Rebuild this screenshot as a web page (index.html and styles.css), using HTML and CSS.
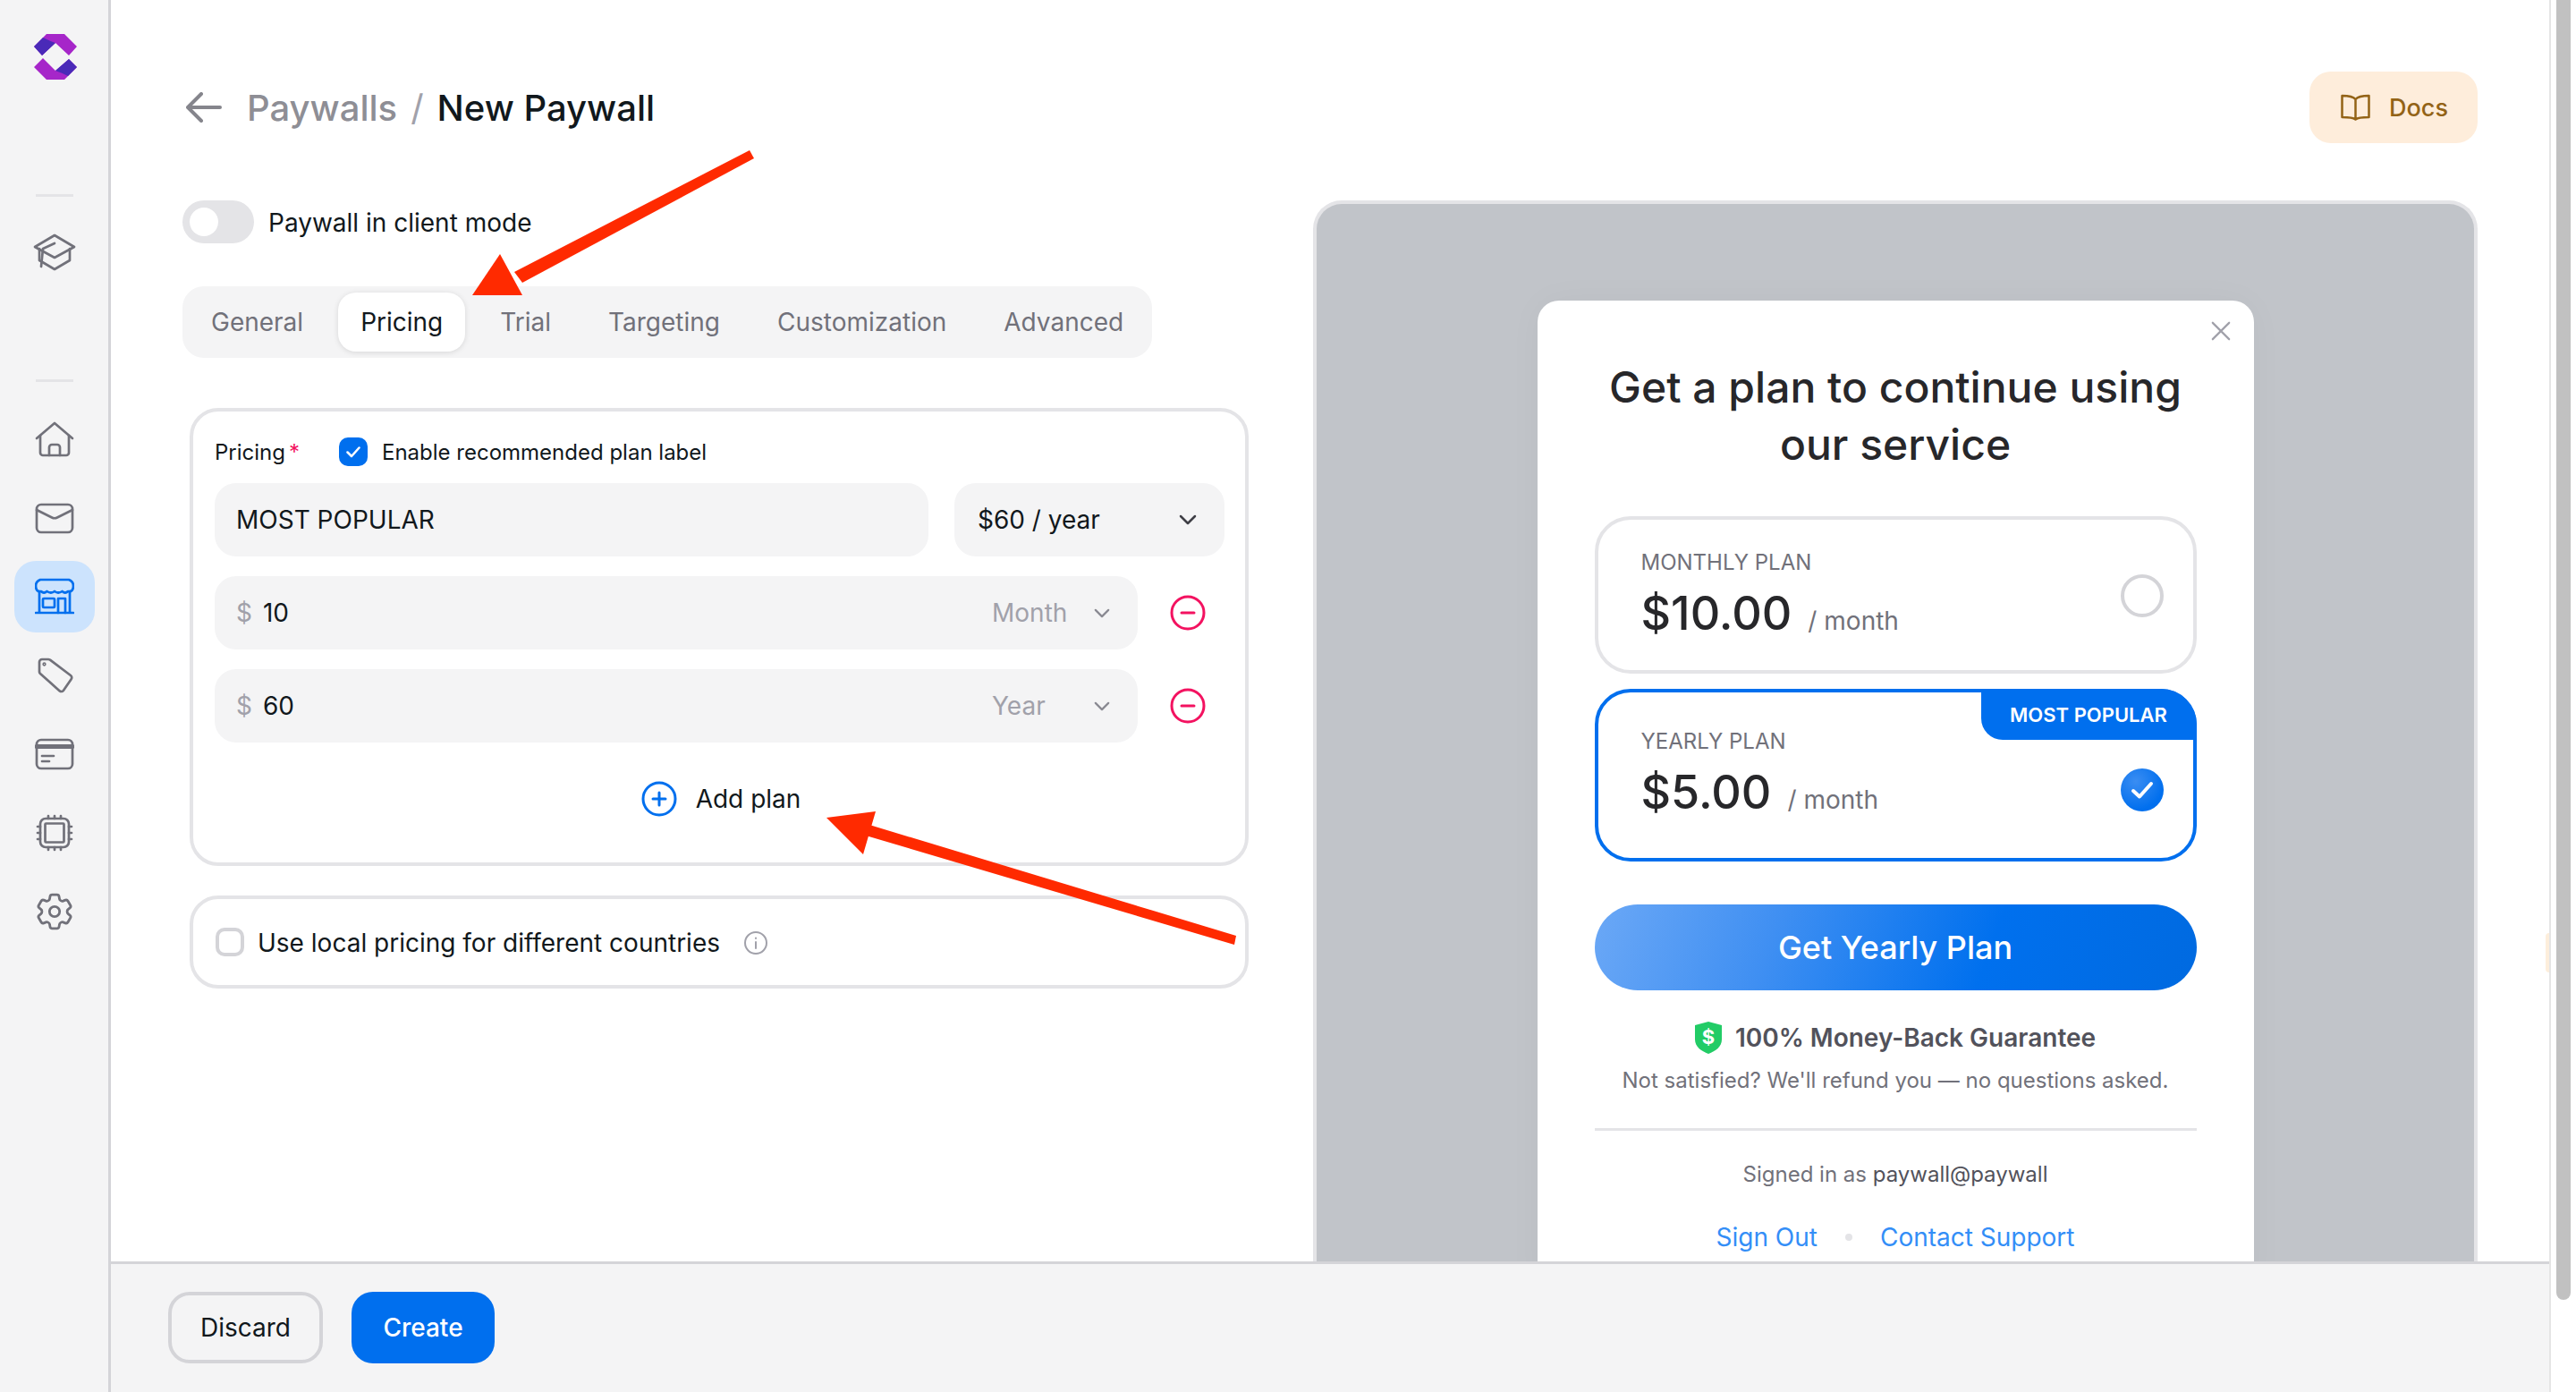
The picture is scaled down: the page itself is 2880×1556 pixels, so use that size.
FILE: index.html
```html
<!DOCTYPE html>
<html lang="en">
<head>
<meta charset="UTF-8">
<meta name="viewport" content="width=device-width, initial-scale=1.0">
<title>New Paywall</title>
<link rel="stylesheet" href="styles.css">
</head>
<body>
  <aside class="sidebar">
    <svg class="logo" viewBox="0 0 50 52">
      <path d="M15 0H35L49 14 40 24 25 10 10 24 1 14Z" fill="#a626c9"/>
      <path d="M1 14 11 4Q19 8 25 10L10 24Z" fill="#4a2ab8"/>
      <path d="M1 37 11 27 25 41 40 28 49 37 35 51H15Z" fill="#a626c9"/>
      <path d="M40 28 49 37 39 47Q31 43 25 41Z" fill="#4a2ab8"/>
    </svg>
    <div class="side-rule first"></div>
    <div class="side-item">
      <svg class="side-icon cap" viewBox="36 258 48 48">
        <path d="M60 263 82 276 60 288 38 276Z"/>
        <path d="M43 278V291L60 301 77 291V278"/>
        <path d="M60 272 47 278 45 298"/>
      </svg>
    </div>
    <div class="side-rule"></div>
    <nav class="side-nav">
      <div class="side-item">
        <svg class="side-icon" viewBox="0 0 44 44">
          <path d="M2 21 22 4 42 21"/>
          <path d="M6 18V37a3 3 0 0 0 3 3H35a3 3 0 0 0 3-3V18"/>
          <path d="M16 40V31a3 3 0 0 1 3-3h6a3 3 0 0 1 3 3V40"/>
        </svg>
      </div>
      <div class="side-item">
        <svg class="side-icon" viewBox="0 0 44 44">
          <rect x="2" y="7" width="40" height="31" rx="5"/>
          <path d="M2 13 19 21.5q3 1.500 6 0L42 13"/>
        </svg>
      </div>
      <div class="side-item active">
        <svg class="side-icon" viewBox="0 0 44 44">
          <path d="M6 3H38Q43 5 43 10 43 17 37 16 34 19 30.500 16 26 19 22 16 18 19 13.500 16 10 19 7 16 1 17 1 10 1 5 6 3Z"/>
          <path d="M5 17V40M39 17V40M1 40H43"/>
          <rect x="9" y="24" width="13" height="10" rx="1"/>
          <path d="M26 40V24H34V40"/>
        </svg>
      </div>
      <div class="side-item">
        <svg class="side-icon" viewBox="0 0 44 44">
          <path d="M5 7a3 3 0 0 1 3-3h7q1 0 2 .6L40 22a3 3 0 0 1 .6 4.200L32 38.800a3 3 0 0 1-4.200.6L6 20q-1-1-1-2Z"/>
          <circle cx="10.500" cy="9.500" r=".8"/>
        </svg>
      </div>
      <div class="side-item">
        <svg class="side-icon" viewBox="0 0 44 44">
          <rect x="2" y="6" width="40" height="32" rx="5"/>
          <path d="M2 13.500H42" class="thick"/>
          <path d="M8 24H21M8 30H16"/>
        </svg>
      </div>
      <div class="side-item">
        <svg class="side-icon" viewBox="0 0 44 44">
          <rect x="6" y="6" width="32" height="32" rx="6"/>
          <rect x="11.500" y="11.500" width="21" height="21" rx="1"/>
          <path d="M15 3V6M22 3V6M29 3V6M15 38V41M22 38V41M29 38V41M3 15H6M3 22H6M3 29H6M38 15H41M38 22H41M38 29H41"/>
        </svg>
      </div>
      <div class="side-item">
        <svg class="side-icon" viewBox="1.500 1.500 21 21">
          <path class="thin" d="M9.594 3.940c.09-.542.56-.94 1.110-.94h2.593c.55 0 1.020.398 1.110.94l.213 1.281c.063.374.313.686.645.870.074.04.147.083.22.127.325.196.72.257 1.075.124l1.217-.456a1.125 1.125 0 0 1 1.370.49l1.296 2.247a1.125 1.125 0 0 1-.26 1.431l-1.003.827c-.293.241-.438.613-.43.992a7.723 7.723 0 0 1 0 .255c-.008.378.137.75.43.991l1.004.827c.424.35.534.955.26 1.430l-1.298 2.247a1.125 1.125 0 0 1-1.369.491l-1.217-.456c-.355-.133-.75-.072-1.076.124a6.470 6.470 0 0 1-.22.128c-.331.183-.581.495-.644.869l-.213 1.281c-.09.543-.56.94-1.110.94h-2.594c-.55 0-1.019-.398-1.110-.94l-.213-1.281c-.062-.374-.312-.686-.644-.87a6.520 6.520 0 0 1-.22-.127c-.325-.196-.72-.257-1.076-.124l-1.217.456a1.125 1.125 0 0 1-1.369-.49l-1.297-2.247a1.125 1.125 0 0 1 .26-1.431l1.004-.827c.292-.24.437-.613.43-.991a6.932 6.932 0 0 1 0-.255c.007-.38-.138-.751-.43-.992l-1.004-.827a1.125 1.125 0 0 1-.26-1.430l1.297-2.247a1.125 1.125 0 0 1 1.370-.491l1.216.456c.356.133.751.072 1.076-.124.072-.044.146-.086.22-.128.332-.183.582-.495.644-.869l.214-1.280Z"/>
          <circle class="thin" cx="12" cy="12" r="2.700"/>
        </svg>
      </div>
    </nav>
  </aside>

  <div class="main">
    <div class="content">
      <header class="page-head">
        <div class="crumbs">
          <svg class="back" viewBox="0 0 40 34">
            <path d="M38 17H3M17 2 2 17 17 32"/>
          </svg>
          <span class="crumb-link">Paywalls</span>
          <span class="crumb-sep">/</span>
          <span class="crumb-now">New Paywall</span>
        </div>
        <button class="docs-btn">
          <svg class="book" viewBox="0 0 33 30">
            <path d="M16.500 6C14 3 9 2 1.500 2v24c7 0 12 0 15 2.500 3-2.500 8-2.500 15-2.500V2C24 2 19 3 16.500 6ZM16.500 6v22"/>
          </svg>
          Docs
        </button>
      </header>

      <div class="columns">
        <section class="left">
          <div class="client-mode">
            <span class="toggle"><span class="knob"></span></span>
            <span class="client-text">Paywall in client mode</span>
          </div>

          <div class="tabs">
            <span class="tab">General</span>
            <span class="tab selected">Pricing</span>
            <span class="tab">Trial</span>
            <span class="tab">Targeting</span>
            <span class="tab">Customization</span>
            <span class="tab">Advanced</span>
          </div>

          <div class="panel pricing">
            <div class="pricing-head">
              <span class="field-label">Pricing<span class="req">*</span></span>
              <span class="check on">
                <svg viewBox="0 0 32 32"><path d="M9.500 16.500 14 21 22.500 11.500"/></svg>
              </span>
              <span class="check-label">Enable recommended plan label</span>
            </div>

            <div class="row">
              <div class="input grow">MOST POPULAR</div>
              <div class="input plan-select">
                $60 / year
                <svg class="chev" viewBox="0 0 20 12"><path d="M2 2 10 10 18 2"/></svg>
              </div>
            </div>

            <div class="row">
              <div class="input price-input">
                <span class="dollar">$</span>
                <span class="amount">10</span>
                <span class="period">Month</span>
                <svg class="chev small" viewBox="0 0 20 12"><path d="M2 2 10 10 18 2"/></svg>
              </div>
              <svg class="remove" viewBox="0 0 40 40">
                <circle cx="20" cy="20" r="18"/>
                <path d="M13 20H27"/>
              </svg>
            </div>

            <div class="row">
              <div class="input price-input">
                <span class="dollar">$</span>
                <span class="amount">60</span>
                <span class="period">Year</span>
                <svg class="chev small" viewBox="0 0 20 12"><path d="M2 2 10 10 18 2"/></svg>
              </div>
              <svg class="remove" viewBox="0 0 40 40">
                <circle cx="20" cy="20" r="18"/>
                <path d="M13 20H27"/>
              </svg>
            </div>

            <div class="add-plan">
              <svg class="add-icon" viewBox="0 0 40 40">
                <circle cx="20" cy="20" r="18"/>
                <path d="M13 20H27M20 13V27"/>
              </svg>
              Add plan
            </div>
          </div>

          <div class="panel local">
            <span class="check"></span>
            <span class="local-text">Use local pricing for different countries</span>
            <svg class="info" viewBox="0 0 28 28">
              <circle cx="14" cy="14" r="12"/>
              <path d="M14 13V20M14 8.500V9"/>
            </svg>
          </div>
        </section>

        <section class="preview">
          <div class="modal">
            <svg class="close" viewBox="0 0 24 24"><path d="M2 2 22 22M22 2 2 22"/></svg>
            <h2 class="modal-title">Get a plan to continue using our service</h2>

            <div class="plan">
              <div>
                <div class="plan-name">MONTHLY PLAN</div>
                <div class="plan-price"><span class="big">$10.00</span><span class="per">/ month</span></div>
              </div>
              <span class="radio"></span>
            </div>

            <div class="plan best">
              <span class="badge">MOST POPULAR</span>
              <div>
                <div class="plan-name">YEARLY PLAN</div>
                <div class="plan-price"><span class="big">$5.00</span><span class="per">/ month</span></div>
              </div>
              <span class="radio checked">
                <svg viewBox="0 0 48 48"><path d="M14 25 21 31.500 34 17"/></svg>
              </span>
            </div>

            <button class="cta">Get Yearly Plan</button>

            <div class="guarantee">
              <svg class="shield" viewBox="0 0 30 36">
                <path d="M15 0 30 4V20C30 28 23 33 15 36 7 33 0 28 0 20V4Z"/>
                <text x="15" y="25" text-anchor="middle">$</text>
              </svg>
              100% Money-Back Guarantee
            </div>
            <p class="refund">Not satisfied? We'll refund you — no questions asked.</p>
            <div class="modal-rule"></div>
            <p class="signed">Signed in as <span class="who">paywall@paywall</span></p>
            <div class="links">
              <span>Sign Out</span>
              <span class="dot"></span>
              <span>Contact Support</span>
            </div>
          </div>
        </section>
      </div>
    </div>

    <footer class="footer">
      <button class="btn-outline">Discard</button>
      <button class="btn-primary">Create</button>
    </footer>
  </div>

  <div class="scrollbar"><div class="thumb"></div></div>
  <div class="edge-tab"></div>

  <!-- red annotation arrows drawn over the screenshot -->
  <svg class="arrows" viewBox="0 0 2880 1556">
    <path d="M838 168 843 177 584 316 575 304Z"/>
    <path d="M528 330 559 284 584 330Z"/>
    <path d="M1382 1046 1380 1056 968 934 972 922Z"/>
    <path d="M924 914 979 907 965 955Z"/>
  </svg>
</body>
</html>
```

FILE: styles.css
```css
* {
  box-sizing: border-box;
}

html, body {
  margin: 0;
  height: 100%;
}

body {
  display: flex;
  overflow: hidden;
  position: relative;
  background: #fff;
  color: #11181c;
  font-family: Inter, "Liberation Sans", sans-serif;
  font-size: 30px;
}

button {
  font-family: inherit;
  cursor: pointer;
}

p, h2 {
  margin: 0;
}

/* sidebar */
.sidebar {
  width: 124px;
  flex: none;
  display: flex;
  flex-direction: column;
  align-items: flex-start;
  padding: 38px 0 0 16px;
  background: #f4f4f5;
  border-right: 3px solid #d4d4d8;
}

.logo {
  width: 50px;
  height: 52px;
  margin-left: 21px;
}

.side-rule {
  width: 42px;
  height: 3px;
  margin: 0 0 0 24px;
  background: #e4e4e7;
}

.side-rule.first {
  margin-top: 127px;
  margin-bottom: 22px;
}

.side-nav {
  display: flex;
  flex-direction: column;
  gap: 8px;
  margin-top: 24px;
}

.side-item {
  width: 90px;
  height: 80px;
  display: flex;
  align-items: center;
  justify-content: center;
  border-radius: 24px;
}

.side-rule:not(.first) {
  margin-top: 102px;
}

.side-item.active {
  background: #cce3fd;
}

.side-icon {
  width: 44px;
  height: 44px;
  fill: none;
  stroke: #71717a;
  stroke-width: 2.700;
  stroke-linecap: round;
  stroke-linejoin: round;
}

.side-icon.cap {
  width: 48px;
  height: 48px;
}

.side-item.active .side-icon {
  stroke: #006fee;
}

.side-icon .thick {
  stroke-width: 5;
}

.side-icon .thin {
  stroke-width: 1.350;
}

/* main area */
.main {
  flex: 1;
  min-width: 0;
  display: flex;
  flex-direction: column;
}

.content {
  flex: 1;
  min-height: 0;
  overflow: hidden;
  padding: 80px 80px 0 80px;
}

.page-head {
  height: 80px;
  display: flex;
  align-items: center;
  justify-content: space-between;
  margin-bottom: 64px;
}

.crumbs {
  display: flex;
  align-items: center;
  font-size: 40px;
  margin-left: 4px;
}

.back {
  width: 40px;
  height: 34px;
  margin-right: 28px;
  fill: none;
  stroke: #85858c;
  stroke-width: 4;
  stroke-linecap: round;
  stroke-linejoin: round;
}

.crumb-link {
  color: #8e8e95;
  font-weight: 500;
}

.crumb-sep {
  color: #a1a1aa;
  margin: 0 15px;
}

.crumb-now {
  font-weight: 500;
}

.docs-btn {
  height: 80px;
  width: 188px;
  display: flex;
  align-items: center;
  gap: 21px;
  padding: 0 0 0 35px;
  border: none;
  border-radius: 24px;
  background: #feeddb;
  color: #936316;
  font-size: 27px;
  font-weight: 500;
}

.book {
  width: 33px;
  height: 30px;
  fill: none;
  stroke: #936316;
  stroke-width: 2.500;
  stroke-linejoin: round;
}

.columns {
  display: flex;
  gap: 72px;
  height: 1300px;
}

.left {
  width: 1192px;
  flex: none;
}

.client-mode {
  display: flex;
  align-items: center;
  gap: 16px;
  height: 48px;
  font-size: 28px;
}

.client-text {
  padding-top: 2px;
}

.toggle {
  width: 80px;
  height: 48px;
  padding: 8px;
  border-radius: 24px;
  background: #e4e4e7;
}

.knob {
  display: block;
  width: 32px;
  height: 32px;
  border-radius: 50%;
  background: #fff;
}

.tabs {
  display: inline-flex;
  gap: 14px;
  height: 80px;
  margin-top: 48px;
  padding: 7px;
  border-radius: 24px;
  background: #f4f4f5;
  color: #71717a;
  font-size: 28px;
}

.tab {
  display: flex;
  align-items: center;
  padding: 0 25px;
  border-radius: 20px;
}

.tab.selected {
  background: #fff;
  color: #11181c;
  box-shadow: 0 1px 6px rgba(0, 0, 0, 0.12);
}

.panel {
  margin-left: 8px;
  border: 4px solid #e4e4e7;
  border-radius: 32px;
}

.pricing {
  height: 512px;
  margin-top: 56px;
  padding: 20px 23px 0 24px;
}

.pricing-head {
  display: flex;
  align-items: center;
  height: 50px;
  margin-bottom: 10px;
  font-size: 24px;
}

.field-label {
  width: 139px;
}

.req {
  color: #f31260;
  margin-left: 4px;
}

.check {
  width: 32px;
  height: 32px;
  flex: none;
  border: 4px solid #d4d4d8;
  border-radius: 10px;
}

.check.on {
  border: none;
  background: #006fee;
}

.check svg {
  display: block;
  fill: none;
  stroke: #fff;
  stroke-width: 2.500;
  stroke-linecap: round;
  stroke-linejoin: round;
}

.check-label {
  margin-left: 16px;
}

.row {
  display: flex;
  align-items: center;
  margin-bottom: 22px;
}

.input {
  height: 82px;
  display: flex;
  align-items: center;
  padding: 0 24px;
  border-radius: 24px;
  background: #f4f4f5;
  font-size: 28px;
}

.grow {
  flex: 1;
  margin-right: 29px;
}

.plan-select {
  width: 302px;
  padding: 0 31px 0 26px;
  justify-content: space-between;
}

.price-input {
  width: 1032px;
}

.dollar {
  color: #a1a1aa;
  margin-right: 12px;
}

.amount {
  flex: 1;
}

.period {
  width: 84px;
  color: #a1a1aa;
}

.chev {
  width: 20px;
  height: 12px;
  fill: none;
  stroke: #3f3f46;
  stroke-width: 2.500;
  stroke-linecap: round;
  stroke-linejoin: round;
}

.chev.small {
  width: 18px;
  height: 11px;
  margin-left: 30px;
  margin-right: 7px;
  stroke: #8a8a92;
}

.remove {
  width: 40px;
  height: 40px;
  margin-left: 36px;
  fill: none;
  stroke: #f31260;
  stroke-width: 3;
  stroke-linecap: round;
}

.add-plan {
  display: flex;
  align-items: center;
  justify-content: center;
  gap: 21px;
  margin-top: 43px;
  margin-left: 3px;
  font-size: 28px;
}

.add-icon {
  width: 40px;
  height: 40px;
  fill: none;
  stroke: #006fee;
  stroke-width: 3;
  stroke-linecap: round;
}

.local {
  height: 104px;
  display: flex;
  align-items: center;
  margin-top: 33px;
  padding-left: 25px;
  font-size: 28px;
}

.local .check {
  margin-right: 15px;
}

.local-text {
  padding-top: 2px;
}

.info {
  width: 28px;
  height: 28px;
  margin-top: 2px;
  margin-left: 26px;
  fill: none;
  stroke: #a1a1aa;
  stroke-width: 2;
  stroke-linecap: round;
}

/* paywall preview */
.preview {
  width: 1302px;
  flex: none;
  padding-top: 108px;
  border: 4px solid #e4e4e7;
  border-bottom: none;
  border-radius: 32px 32px 0 0;
  background: #c1c4c9;
}

.modal {
  position: relative;
  width: 801px;
  margin: 0 auto;
  padding: 65px 64px 40px;
  border-radius: 24px 24px 0 0;
  background: #fff;
  box-shadow: 0 0 40px rgba(0, 0, 0, 0.03);
}

.close {
  position: absolute;
  top: 23px;
  right: 26px;
  width: 22px;
  height: 22px;
  fill: none;
  stroke: #a1a1aa;
  stroke-width: 2.500;
  stroke-linecap: round;
}

.modal-title {
  margin: 0 auto 48px;
  width: 660px;
  font-size: 48px;
  font-weight: 500;
  line-height: 64px;
  text-align: center;
  color: #27272a;
}

.plan {
  position: relative;
  display: flex;
  align-items: center;
  justify-content: space-between;
  padding: 33px 33px 31px 48px;
  margin-bottom: 17px;
  border: 4px solid #e4e4e7;
  border-radius: 40px;
}

.plan.best {
  padding-top: 40px;
  padding-bottom: 41px;
  margin-bottom: 48px;
  border-color: #006fee;
}

.badge {
  position: absolute;
  top: -4px;
  right: -4px;
  width: 241px;
  height: 57px;
  display: flex;
  align-items: center;
  justify-content: center;
  border-radius: 0 40px 0 24px;
  background: #006fee;
  color: #fff;
  font-size: 22px;
  font-weight: 600;
}

.plan-name {
  height: 30px;
  margin-bottom: 10px;
  line-height: 30px;
  font-size: 24px;
  color: #71717a;
}

.plan-price {
  height: 64px;
  display: flex;
  align-items: baseline;
  color: #27272a;
}

.big {
  font-size: 52px;
  font-weight: 500;
  line-height: 64px;
}

.per {
  margin-left: 18px;
  font-size: 28px;
  color: #71717a;
}

.radio {
  width: 48px;
  height: 48px;
  border: 4px solid #d4d4d8;
  border-radius: 50%;
}

.radio.checked {
  margin-top: 34px;
  border: none;
  background: radial-gradient(circle at 35% 30%, #3a8df2, #006fee 70%);
}

.radio.checked svg {
  display: block;
  fill: none;
  stroke: #fff;
  stroke-width: 4;
  stroke-linecap: round;
  stroke-linejoin: round;
}

.cta {
  display: block;
  width: 100%;
  height: 96px;
  border: none;
  border-radius: 48px;
  background: linear-gradient(110deg, #6ba8f6 0%, #3f8ff2 30%, #0070ee 65%, #006ae0 100%);
  color: #fff;
  font-size: 36px;
  font-weight: 500;
}

.guarantee {
  height: 40px;
  display: flex;
  align-items: center;
  justify-content: center;
  gap: 15px;
  margin-top: 33px;
  font-size: 28px;
  font-weight: 600;
  color: #52525b;
}

.shield {
  width: 30px;
  height: 36px;
}

.shield path {
  fill: #22cc66;
}

.shield text {
  fill: #fff;
  font-size: 22px;
  font-weight: 700;
}

.refund {
  margin-top: 13px;
  line-height: 30px;
  font-size: 24px;
  text-align: center;
  color: #71717a;
}

.modal-rule {
  height: 3px;
  margin-top: 38px;
  background: #e4e4e7;
}

.signed {
  margin-top: 34px;
  line-height: 30px;
  font-size: 24px;
  text-align: center;
  color: #71717a;
}

.who {
  color: #52525b;
}

.links {
  height: 40px;
  display: flex;
  align-items: center;
  justify-content: center;
  gap: 31px;
  margin-top: 35px;
  font-size: 28px;
  color: #338ef7;
}

.dot {
  width: 8px;
  height: 8px;
  border-radius: 50%;
  background: #e4e4e7;
}

/* bottom bar */
.footer {
  height: 146px;
  flex: none;
  display: flex;
  align-items: flex-start;
  gap: 32px;
  padding: 31px 0 0 64px;
  border-top: 3px solid #d4d4d8;
  background: #f4f4f5;
}

.btn-outline,
.btn-primary {
  height: 80px;
  border-radius: 24px;
  font-size: 28px;
}

.btn-outline {
  width: 173px;
  border: 4px solid #d4d4d8;
  background: transparent;
  color: #11181c;
}

.btn-primary {
  width: 160px;
  border: none;
  background: #006fee;
  color: #fff;
  font-weight: 500;
}

/* scrollbar */
.scrollbar {
  width: 30px;
  flex: none;
  padding: 0 6px 0 6px;
  border-left: 2px solid #e5e5e5;
  background: #fff;
}

.thumb {
  width: 16px;
  height: 1453px;
  border-radius: 0 0 8px 8px;
  background: #c1c1c1;
}

.edge-tab {
  position: absolute;
  left: 2846px;
  top: 1043px;
  width: 4px;
  height: 44px;
  border-radius: 4px 0 0 4px;
  background: #fdeedb;
}

/* annotation arrows */
.arrows {
  position: absolute;
  top: 0;
  left: 0;
  width: 2880px;
  height: 1556px;
  fill: #ff2a00;
  pointer-events: none;
}
```
